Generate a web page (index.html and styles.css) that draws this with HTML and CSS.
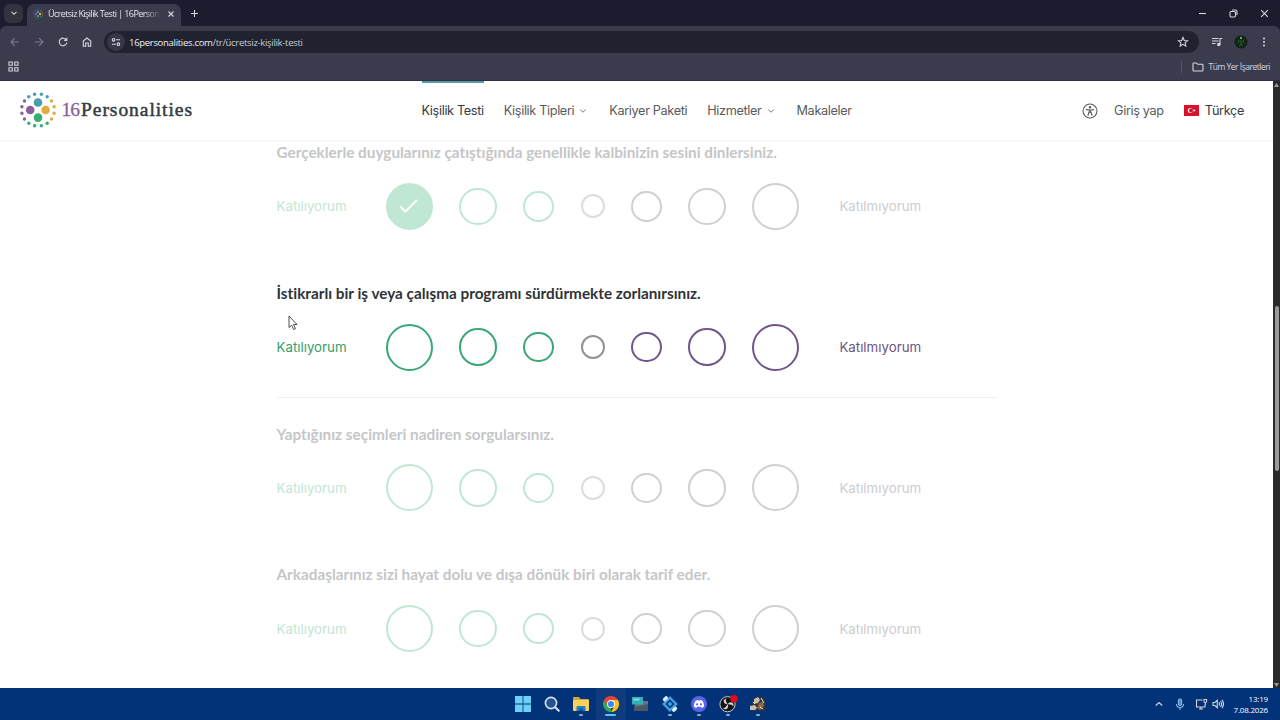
FILE: index.html
```html
<!DOCTYPE html>
<html lang="tr">
<head>
  <meta charset="UTF-8">
  <meta name="viewport" content="width=device-width, initial-scale=1.0">
  <title>Ücretsiz Kişilik Testi | 16Personalities</title>
  <link rel="stylesheet" href="styles.css">
</head>
<body>

  <!-- Browser -->
  <div class="tabstrip">
    <div class="tab-search"><svg width="8" height="8" viewBox="0 0 8 8"><path d="M1.500 2.800 4 5.300 6.500 2.800"/></svg></div>
    <div class="tab">
      <svg class="favicon" width="10" height="10" viewBox="0 0 36 36"><use href="#logo-dots"/></svg>
      <span class="tab-title">Ücretsiz Kişilik Testi | 16Persona</span>
      <svg class="tab-close" width="8" height="8" viewBox="0 0 8 8"><path d="M1.500 1.500l5 5M6.500 1.500l-5 5"/></svg>
    </div>
    <svg class="tab-new" width="9" height="9" viewBox="0 0 9 9"><path d="M4.500 1v7M1 4.500h7"/></svg>
    <div class="window-buttons">
      <svg width="9" height="9" viewBox="0 0 9 9"><path d="M1 4.500h7"/></svg>
      <svg width="9" height="9" viewBox="0 0 9 9"><rect x="1" y="2.500" width="5.500" height="5.500" rx="1.200"/><path d="M3 1h3.500A1.500 1.500 0 0 1 8 2.500V6"/></svg>
      <svg width="9" height="9" viewBox="0 0 9 9"><path d="M1.200 1.200l6.600 6.600M7.800 1.200L1.200 7.800"/></svg>
    </div>
  </div>

  <div class="toolbar-wrap">
    <div class="toolbar">
      <svg class="dim" width="12" height="12" viewBox="0 0 12 12"><path d="M10 6H2.200M5.800 2.200L2 6l3.800 3.800"/></svg>
      <svg class="dim" width="12" height="12" viewBox="0 0 12 12"><path d="M2 6h7.800M6.200 2.200L10 6 6.200 9.800"/></svg>
      <svg width="12" height="12" viewBox="0 0 12 12"><path d="M9.300 4A3.800 3.800 0 1 0 9.800 6.600M9.800 1.800v2.600H7.200"/></svg>
      <svg width="12" height="12" viewBox="0 0 12 12"><path d="M2.300 5 6 2l3.700 3v5.300H7.300V7H4.700v3.300H2.300z"/></svg>
      <div class="address">
        <span class="site-info"><svg width="10" height="10" viewBox="0 0 10 10"><circle cx="2.600" cy="2.800" r="1.300"/><path d="M5.200 2.800H9M1 7.200h3.800"/><circle cx="7.400" cy="7.200" r="1.300"/></svg></span>
        <span class="url">16personalities.com<i>/tr/ücretsiz-kişilik-testi</i></span>
        <svg width="12" height="12" viewBox="0 0 12 12"><path d="M6 1.500l1.300 3 3.200.3-2.400 2.100.7 3.200L6 8.400 3.200 10.100l.7-3.200L1.500 4.800l3.200-.3z"/></svg>
      </div>
      <svg class="media" width="12" height="12" viewBox="0 0 12 12"><path d="M1 2.500h6.500M1 5h6.500M1 7.500h3.500M9 8.500v-6h2.200"/><circle cx="7.800" cy="8.600" r="1.200" fill="#d5d6e2"/></svg>
      <svg class="avatar" width="14" height="14" viewBox="0 0 14 14"><circle cx="7" cy="7" r="6.500" fill="#0f2015" stroke="none"/><path d="M7 5v4M4 4.500l1 2-1.500 2M10 4.500l-1 2 1.500 2M5 11l2-1.500L9 11" stroke="#2c7a32" stroke-width=".9"/><circle cx="7" cy="3" r="1" fill="#a5c8a0" stroke="none"/></svg>
      <svg class="menu-dots" width="4" height="12" viewBox="0 0 4 12"><circle cx="2" cy="2.500" r="1"/><circle cx="2" cy="6" r="1"/><circle cx="2" cy="9.500" r="1"/></svg>
    </div>
  </div>

  <div class="bookmarks">
    <svg width="11" height="11" viewBox="0 0 11 11"><path d="M1 1h3.300v3.300H1zM6.700 1H10v3.300H6.700zM1 6.700h3.300V10H1zM6.700 6.700H10V10H6.700z"/></svg>
    <div class="all-bookmarks">
      <svg width="12" height="10" viewBox="0 0 12 10"><path d="M1 1.700q0-.7.700-.7H4.500l1.200 1.300h4.600q.7 0 .7.700v5.300q0 .7-.7.700H1.700Q1 9 1 8.300z"/></svg>
      <span>Tüm Yer İşaretleri</span>
    </div>
  </div>

  <!-- Page -->
  <div class="viewport">
    <div class="page">
      <header class="site-header">
        <a class="logo">
          <svg width="36" height="36" viewBox="0 0 36 36">
            <g id="logo-dots">
              <circle cx="18" cy="10.500" r="4.300" fill="#459fb3"/>
              <circle cx="10.200" cy="18" r="4.300" fill="#88619a"/>
              <circle cx="25.600" cy="18" r="4.300" fill="#e0ad3c"/>
              <circle cx="18" cy="25.600" r="4.300" fill="#35ae75"/>
              <g fill="#459fb3"><circle cx="14.600" cy="2.200" r="1.700"/><circle cx="21.400" cy="2.200" r="1.700"/><circle cx="8.800" cy="4.700" r="1.700"/><circle cx="27.200" cy="4.700" r="1.700"/></g>
              <g fill="#88619a"><circle cx="4.500" cy="9" r="1.700"/><circle cx="1.900" cy="14.800" r="1.700"/><circle cx="1.900" cy="21.200" r="1.700"/><circle cx="4.500" cy="27" r="1.700"/></g>
              <g fill="#e0ad3c"><circle cx="31.500" cy="9" r="1.700"/><circle cx="34.100" cy="14.800" r="1.700"/><circle cx="34.100" cy="21.200" r="1.700"/><circle cx="31.500" cy="27" r="1.700"/></g>
              <g fill="#35ae75"><circle cx="8.800" cy="31.300" r="1.700"/><circle cx="14.600" cy="33.800" r="1.700"/><circle cx="21.400" cy="33.800" r="1.700"/><circle cx="27.200" cy="31.300" r="1.700"/></g>
            </g>
          </svg>
          <span class="logo-number">16</span><span class="logo-name">Personalities</span>
        </a>
        <nav>
          <a class="active">Kişilik Testi</a>
          <a class="wide">Kişilik Tipleri <svg width="8" height="6" viewBox="0 0 8 6"><path d="M1.200 1.600 4 4.200l2.800-2.600"/></svg></a>
          <a>Kariyer Paketi</a>
          <a class="wide">Hizmetler <svg width="8" height="6" viewBox="0 0 8 6"><path d="M1.200 1.600 4 4.200l2.800-2.600"/></svg></a>
          <a>Makaleler</a>
        </nav>
        <div class="user-menu">
          <svg width="16" height="16" viewBox="0 0 16 16"><circle cx="8" cy="8" r="7" fill="none" stroke="#575c60" stroke-width="1.100"/><circle cx="8" cy="4.300" r="1.200"/><path fill="none" d="M4.500 6.700 8 7.200l3.500-.5M8 7v2.300M6 12.200l1.200-3.400h1.600l1.200 3.400" stroke="#575c60" stroke-width="1.200" stroke-linecap="round"/></svg>
          <a class="login">Giriş yap</a>
          <svg class="flag" width="15" height="11" viewBox="0 0 15 11"><rect width="15" height="11" fill="#d8102b"/><circle cx="6.300" cy="5.500" r="2.500" fill="#fff"/><circle cx="7" cy="5.500" r="2" fill="#d8102b"/><path d="M8.700 5.500l1-.4.100-1 .7.800 1-.3-.5.900.5.900-1-.3-.7.800-.1-1z" fill="#fff"/></svg>
          <a class="lang">Türkçe</a>
        </div>
      </header>

      <main>
        <section class="question faded">
          <h2>Gerçeklerle duygularınız çatıştığında genellikle kalbinizin sesini dinlersiniz.</h2>
          <div class="answers">
            <span class="agree">Katılıyorum</span>
            <div class="options">
              <i class="opt lg green checked"><svg width="20" height="16" viewBox="0 0 20 16"><path d="M1.500 8.500l5 5L18 2"/></svg></i>
              <i class="opt md green"></i><i class="opt sm green"></i><i class="opt xs"></i><i class="opt sm purple"></i><i class="opt md purple"></i><i class="opt lg purple"></i>
            </div>
            <span class="disagree">Katılmıyorum</span>
          </div>
        </section>

        <section class="question current">
          <h2>İstikrarlı bir iş veya çalışma programı sürdürmekte zorlanırsınız.</h2>
          <div class="answers">
            <span class="agree">Katılıyorum</span>
            <div class="options">
              <i class="opt lg green"></i><i class="opt md green"></i><i class="opt sm green"></i><i class="opt xs"></i><i class="opt sm purple"></i><i class="opt md purple"></i><i class="opt lg purple"></i>
            </div>
            <span class="disagree">Katılmıyorum</span>
          </div>
        </section>

        <section class="question faded">
          <h2>Yaptığınız seçimleri nadiren sorgularsınız.</h2>
          <div class="answers">
            <span class="agree">Katılıyorum</span>
            <div class="options">
              <i class="opt lg green"></i><i class="opt md green"></i><i class="opt sm green"></i><i class="opt xs"></i><i class="opt sm purple"></i><i class="opt md purple"></i><i class="opt lg purple"></i>
            </div>
            <span class="disagree">Katılmıyorum</span>
          </div>
        </section>

        <section class="question faded">
          <h2>Arkadaşlarınız sizi hayat dolu ve dışa dönük biri olarak tarif eder.</h2>
          <div class="answers">
            <span class="agree">Katılıyorum</span>
            <div class="options">
              <i class="opt lg green"></i><i class="opt md green"></i><i class="opt sm green"></i><i class="opt xs"></i><i class="opt sm purple"></i><i class="opt md purple"></i><i class="opt lg purple"></i>
            </div>
            <span class="disagree">Katılmıyorum</span>
          </div>
        </section>
      </main>
    </div>

    <div class="scrollbar">
      <svg width="5" height="4" viewBox="0 0 5 4"><path d="M2.500 0 5 4H0z"/></svg>
      <div class="thumb"></div>
      <svg width="5" height="4" viewBox="0 0 5 4"><path d="M0 0h5L2.500 4z"/></svg>
    </div>
  </div>

  <!-- Taskbar -->
  <footer class="taskbar">
    <div class="apps">
      <span class="app"><svg width="18" height="18" viewBox="0 0 18 18"><path fill="#6cd0f7" d="M1 1h7.600v7.600H1zM9.400 1H17v7.600H9.400zM1 9.400h7.600V17H1zM9.400 9.400H17V17H9.400z"/></svg></span>
      <span class="app"><svg width="18" height="18" viewBox="0 0 18 18"><circle cx="8" cy="8" r="5.600" fill="#24538f" stroke="#dce5f0" stroke-width="1.600"/><path d="M12.200 12.200l3.600 3.600" stroke="#dce5f0" stroke-width="2" stroke-linecap="round"/></svg></span>
      <span class="app open"><svg width="18" height="18" viewBox="0 0 18 18"><path fill="#e2a528" d="M1 3q0-1 1-1h5l1.500 2H1z"/><path fill="#fad25a" d="M1 5q0-.8.800-.8H16q1 0 1 1V15q0 1-1 1H2q-1 0-1-1z"/><path fill="#2480c6" d="M4.500 16v-4q0-1 1-1h7q1 0 1 1v4z"/><path fill="#155a96" d="M7 13.500h4V16H7z"/></svg></span>
      <span class="app open focused"><svg width="18" height="18" viewBox="0 0 18 18"><path fill="#e94235" d="M9 9 2.070 5A8 8 0 0 1 15.930 5z"/><path fill="#33a753" d="M9 9v8A8 8 0 0 1 2.070 5z"/><path fill="#e94235" d="M2.070 5H16v.200H9L5.700 11z"/><path fill="#fbc116" d="M9 5h6.930A8 8 0 0 1 9 17l3.400-6z"/><circle cx="9" cy="9" r="4" fill="#fff"/><circle cx="9" cy="9" r="3.100" fill="#4385f3"/></svg></span>
      <span class="app"><svg width="18" height="18" viewBox="0 0 18 18"><path fill="#667584" d="M6 6h11v10H3v-4z"/><path fill="#4b5866" d="M3 12l14-3v7H3z"/><path fill="#35aebc" d="M1 2h11v7.500H1z"/><path fill="#7be2e3" d="M2.500 3.500h6v2h-6z"/></svg></span>
      <span class="app open"><svg width="18" height="18" viewBox="0 0 18 18"><path fill="none" stroke="#3f9fe0" stroke-width="2.400" d="M9 2.800 15.200 9 9 15.200 2.800 9z"/><path fill="#3f9fe0" d="M9 6.500 11.500 9 9 11.500 6.500 9z"/><path d="M3.600 4.600l1.600-1.600M12.800 15l1.600-1.600" stroke="#d7efff" stroke-width="3.600" stroke-linecap="round"/></svg></span>
      <span class="app open"><svg width="18" height="18" viewBox="0 0 18 18"><circle cx="9" cy="9" r="8" fill="#5a63ec"/><path fill="#fff" d="M5.400 5.900q1.500-.9 2.500-.9l.3.600h1.600l.3-.6q1 0 2.500.9 1.700 3 1.500 5.500-1.300 1.200-2.700 1.300l-.7-1H7.300l-.7 1q-1.400-.1-2.700-1.300-.2-2.500 1.500-5.500z"/><circle cx="7" cy="9.300" r="1.100" fill="#5a63ec"/><circle cx="11" cy="9.300" r="1.100" fill="#5a63ec"/></svg></span>
      <span class="app open"><svg width="20" height="18" viewBox="0 0 20 18"><circle cx="9.500" cy="9.200" r="7.600" fill="#151515" stroke="#c9ccd3" stroke-width="1"/><path fill="#d5d5d8" d="M9.500 9.200q-3.500.2-4-3.400 1-2.200 3-2.400-1.500 1.500-.2 3.500zM9.500 9.200q2-2.800 5.200-1.500 1.300 2 .6 3.800-.8-2-3-2.100zM9.500 9.200q1.600 3.200-1.100 5.100-2.300.2-3.600-1.300 2.100.3 3.300-1.600z"/><circle cx="16" cy="3.800" r="3.700" fill="#e3081b"/></svg></span>
      <span class="app open"><svg width="18" height="18" viewBox="0 0 18 18"><path fill="#31343a" d="M2 11 4 4l6-3 5 2 2 6-1 7H3z"/><path fill="#c7bfb2" d="M5 4l4-2 2 3-2 3-4 1zM1 11l5-1 2 3-2 2H1z"/><path fill="#8d6a48" d="M10 8l4-1 1 4-4 4-3-2z"/><path stroke="#eceae4" d="M12 3l3 5M4 7l2 2M11 12l3 2"/></svg></span>
    </div>
    <div class="tray">
      <svg width="10" height="10" viewBox="0 0 10 10"><path d="M1.800 6.500 5 3.500l3.200 3"/></svg>
      <svg class="mic" width="10" height="13" viewBox="0 0 10 13"><rect x="3.400" y="1" width="3.200" height="6.500" rx="1.600" fill="#4f87c7"/><path d="M1.500 6q0 3.500 3.500 3.500T8.500 6M5 9.500V12"/></svg>
      <svg width="13" height="12" viewBox="0 0 13 12"><path d="M7.500 2H1.500v7h8.500V6.500M4 11h4M5.800 9v2M9 1.500v2q0 1.200 1.300 1.200T11.600 3.500v-2zM10.300 4.700V7"/></svg>
      <svg width="12" height="12" viewBox="0 0 12 12"><path d="M1 4.500h2L5.300 2.300v7.400L3 7.500H1zM7 4.400q1.200 1.600 0 3.200M8.500 3q2.300 3 0 6M10 1.800q3 4.200 0 8.400"/></svg>
      <div class="clock"><span>13:19</span><span>7.08.2026</span></div>
    </div>
  </footer>

  <svg class="cursor" width="10" height="16" viewBox="0 0 10 16"><path d="M1 1v11.500l2.700-2.300 1.900 4.300 1.900-.8-1.900-4.200H9z"/></svg>

</body>
</html>
```
FILE: styles.css
```css
/* Reset and base */
* { margin: 0; padding: 0; box-sizing: border-box; }
body {
  width: 1280px;
  height: 720px;
  overflow: hidden;
  display: flex;
  flex-direction: column;
  font-family: Inter, "Liberation Sans", sans-serif;
  background: #fff;
}
svg { flex: none; }

/* Browser tabs */
.tabstrip {
  height: 26px;
  background: #1b1c2e;
  display: flex;
  align-items: center;
  padding-left: 4px;
}
.tabstrip svg, .toolbar svg, .bookmarks svg, .tray svg {
  fill: none;
  stroke: #d5d6e2;
  stroke-width: 1.1;
}
.tabstrip svg.favicon { stroke: none; }
.tab-search {
  width: 19px;
  height: 19px;
  border-radius: 6px;
  background: #32333f;
  display: flex;
  align-items: center;
  justify-content: center;
}
.tab {
  width: 154px;
  height: 22px;
  margin: 4px 0 0 4px;
  padding: 0 6px 3px;
  border-radius: 7px 7px 0 0;
  background: #3a3b4d;
  display: flex;
  align-items: center;
}
.tab-title {
  width: 113px;
  margin-left: 5px;
  white-space: nowrap;
  font: 9px "Open Sans", sans-serif;
  letter-spacing: -0.6px;
  color: #e4e4ec;
  -webkit-mask-image: linear-gradient(to right, #000 85%, transparent);
  mask-image: linear-gradient(to right, #000 85%, transparent);
}
.tab-close { margin-left: 6px; }
.tab-new { margin-left: 9px; }
.window-buttons {
  margin-left: auto;
  padding-right: 11px;
  display: flex;
  gap: 22px;
}

/* Toolbar */
.toolbar-wrap { background: #1b1c2e; }
.toolbar {
  height: 32px;
  background: #3a3b4d;
  border-radius: 6px 6px 0 0;
  display: flex;
  align-items: center;
  padding-left: 9px;
  gap: 12px;
}
.toolbar .dim { stroke: #7b7c8d; }
.address {
  width: 1095px;
  height: 22px;
  margin-left: -1px;
  padding: 0 10px 0 3px;
  border-radius: 11px;
  background: #20222f;
  display: flex;
  align-items: center;
}
.site-info {
  width: 18px;
  height: 18px;
  border-radius: 50%;
  background: #363848;
  display: flex;
  align-items: center;
  justify-content: center;
}
.url {
  flex: 1;
  margin-left: 4px;
  font: 9.5px "Open Sans", sans-serif;
  letter-spacing: -0.3px;
  color: #f0f0f5;
}
.url i { font-style: normal; color: #c9cad6; }
.toolbar svg.avatar { margin-left: -1px; }
.toolbar svg.menu-dots { margin-left: 2px; fill: #d5d6e2; stroke: none; }

/* Bookmarks */
.bookmarks {
  height: 23px;
  background: #3a3b4d;
  border-bottom: 1px solid #30313f;
  display: flex;
  align-items: center;
  justify-content: space-between;
  padding: 0 10px 5px 8px;
}
.all-bookmarks {
  display: flex;
  align-items: center;
  gap: 4px;
  padding-left: 10px;
  border-left: 1px solid #55566a;
  font: 8.5px/12px "Open Sans", sans-serif;
  letter-spacing: -0.48px;
  color: #d5d6e2;
}

/* Page */
.viewport {
  height: 607px;
  display: flex;
  overflow: hidden;
}
.page {
  width: 1273px;
  height: 607px;
  overflow: hidden;
}
.site-header {
  height: 60px;
  display: flex;
  border-bottom: 1px solid #f6f6f7;
  box-shadow: 0 1px 2px rgba(0, 0, 0, 0.03);
  background: #fff;
  font-size: 12.7px;
  letter-spacing: -0.35px;
  color: #575c60;
}
.logo {
  width: 421.5px;
  padding: 0 0 1px 19.5px;
  display: flex;
  align-items: center;
  font-family: "Liberation Serif", serif;
  font-size: 19.5px;
  letter-spacing: 0;
}
.logo-number {
  margin-left: 6px;
  letter-spacing: -1px;
  color: #88619a;
  -webkit-text-stroke: 0.3px #88619a;
}
.logo-name {
  margin-left: 2px;
  color: #343c41;
  letter-spacing: 0.95px;
  -webkit-text-stroke: 0.5px #343c41;
}
nav { display: flex; gap: 20px; }
nav a {
  display: flex;
  align-items: center;
  gap: 5px;
  white-space: nowrap;
  border-top: 2px solid transparent;
  border-bottom: 2px solid transparent;
}
nav a.active { border-top-color: #519ba6; color: #343c41; }
nav .wide { padding-right: 2px; }
nav svg { fill: none; stroke: #7a7f83; }
.user-menu {
  margin-left: auto;
  padding-right: 29px;
  display: flex;
  align-items: center;
  fill: #575c60;
}
.login { margin: 0 20px 0 16px; }
.lang { margin-left: 6px; color: #343c41; }

/* Questions */
main {
  width: 720px;
  margin: -24.3px auto 0;
  position: relative;
  z-index: -1;
}
.question {
  height: 140.7px;
  padding-top: 25.6px;
  border-bottom: 1px solid transparent;
}
.question.current { border-bottom-color: #f0f0f1; }
.question h2 {
  font: bold 15.3px/20px Lato, sans-serif;
  font-variant-ligatures: none;
  color: #2e3338;
  white-space: nowrap;
}
.answers {
  height: 48px;
  margin-top: 20.2px;
  display: flex;
  align-items: center;
  gap: 40px;
  font-size: 13.3px;
}
.agree { width: 69.3px; color: #35a06c; white-space: nowrap; }
.disagree { color: #6d5484; white-space: nowrap; }
.options {
  width: 413.6px;
  display: flex;
  align-items: center;
  justify-content: space-between;
}
.opt {
  border: 2px solid #949496;
  border-radius: 50%;
  display: flex;
  align-items: center;
  justify-content: center;
}
.lg { width: 47px; height: 47px; }
.md { width: 37.4px; height: 37.4px; }
.sm { width: 30.6px; height: 30.6px; }
.xs { width: 24px; height: 24px; }
.green { border-color: #3ba776; }
.purple { border-color: #70568a; }

.faded h2 { color: #c5c6c8; }
.faded .agree { color: #c0e7d4; }
.faded .disagree { color: #cdcdcf; }
.faded .opt { border-color: #dcdcde; }
.faded .green { border-color: #c0e7d4; }
.faded .purple { border-color: #d0cfd3; }
.faded .checked { background: #c0e7d4; }
.checked svg { fill: none; stroke: #fff; stroke-width: 1.8; }

/* Scrollbar */
.scrollbar {
  width: 7px;
  background: #2a2b2c;
  padding: 2px 1px 1px;
  display: flex;
  flex-direction: column;
  justify-content: space-between;
  align-items: center;
  fill: #9b9b9b;
}
.thumb {
  width: 4px;
  height: 165px;
  margin-top: 7px;
  border-radius: 2px;
  background: #9b9b9b;
}

/* Taskbar */
.taskbar {
  height: 32px;
  background: #023277;
  display: flex;
  align-items: center;
}
.apps {
  margin-left: 508px;
  display: flex;
}
.app {
  width: 29.4px;
  height: 32px;
  padding-top: 7px;
  display: flex;
  flex-direction: column;
  align-items: center;
}
.app.open::after {
  content: "";
  width: 4px;
  height: 2px;
  margin-top: 1px;
  border-radius: 1px;
  background: #8fa9cc;
}
.app.focused { background: #0f3c7e; border-radius: 3px; }
.app.focused::after { width: 11px; background: #5fc3f2; }
.tray {
  margin-left: auto;
  padding-right: 12px;
  display: flex;
  align-items: center;
}
.tray svg:nth-child(2) { margin-left: 11px; }
.tray svg:nth-child(3) { margin-left: 10px; }
.tray svg:nth-child(4) { margin-left: 4px; }
.tray svg.mic { stroke: #8bb9e8; }
.clock {
  margin-left: 10px;
  display: flex;
  flex-direction: column;
  align-items: flex-end;
  font: 8px/11px "Open Sans", sans-serif;
  letter-spacing: -0.2px;
  color: #fff;
}

/* Mouse pointer */
.cursor {
  position: absolute;
  left: 288px;
  top: 315px;
  fill: #fff;
  stroke: #222;
  stroke-width: 0.8;
}
```
